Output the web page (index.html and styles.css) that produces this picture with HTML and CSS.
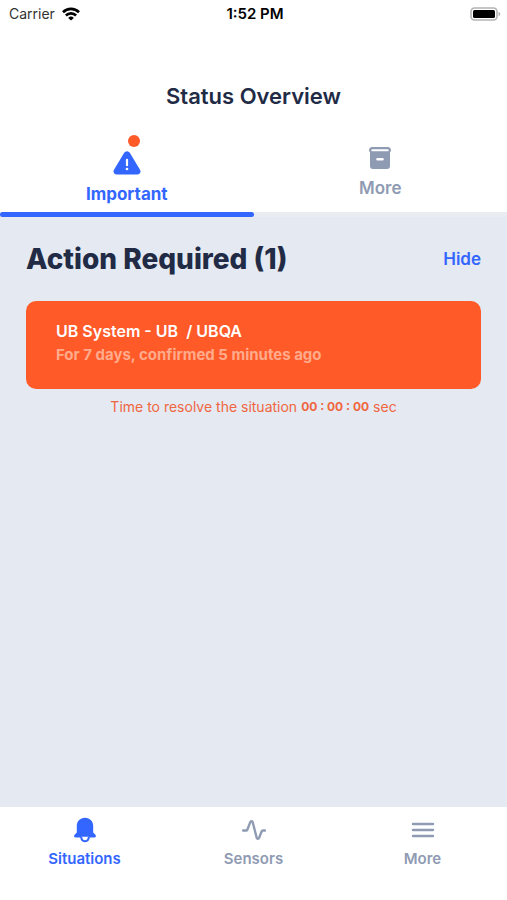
FILE: index.html
```html
<!DOCTYPE html>
<html lang="en">
<head>
    <meta charset="UTF-8">
    <meta name="viewport" content="width=device-width, initial-scale=1.0">
    <title>Status Overview</title>
    <link rel="stylesheet" href="styles.css">
</head>
<body>
    <div class="status-bar">
        <div class="carrier">
            <span>Carrier</span>
            <svg width="18" height="14" viewBox="0 0 18 14" fill="none" stroke="#000" stroke-width="2.6">
                <path d="M1 5.2a11.4 11.4 0 0 1 16 0"/>
                <path d="M3.9 8.5a7.2 7.2 0 0 1 10.2 0"/>
                <path d="M9 13.6L6.2 10.9a4 4 0 0 1 5.6 0z" fill="#000" stroke="none"/>
            </svg>
        </div>
        <span class="time">1:52 PM</span>
        <svg class="battery" width="31" height="14" viewBox="0 0 31 14">
            <rect x="1" y="1" width="26" height="12" rx="3.5" fill="#fff" stroke="#b4b4b4" stroke-width="1.6"/>
            <rect x="3" y="3" width="22" height="8" rx="1.5" fill="#000"/>
            <path d="M28.5 4.8c2.4.8 2.4 3.6 0 4.4z" fill="#b4b4b4"/>
        </svg>
    </div>

    <header class="header">
        <h1>Status Overview</h1>
        <nav class="tabs">
            <a href="#important" class="tab active">
                <span class="tab-icon">
                    <svg width="28" height="24" viewBox="0 0 28 24">
                        <path d="M11.2 1.8a3.3 3.3 0 0 1 5.6 0l10.2 17c1.3 2.3-.1 4.7-2.6 4.7H3.6C1.1 23.5-.3 21.1 1 18.8z" fill="#3366ff"/>
                        <path d="M14 8.8v5.4" stroke="#fff" stroke-width="2.2" stroke-linecap="round"/>
                        <circle cx="14" cy="18" r="1.3" fill="#fff"/>
                    </svg>
                    <span class="badge"></span>
                </span>
                <span>Important</span>
            </a>
            <a href="#more" class="tab">
                <svg width="22" height="22" viewBox="0 0 22 22" fill="currentColor">
                    <path fill-rule="evenodd" d="M3 0h16a3 3 0 0 1 2 5.2V19a3 3 0 0 1-3 3H4a3 3 0 0 1-3-3V5.200A3 3 0 0 1 3 0zm.3 2.200a1 1 0 0 0 0 2h15.400a1 1 0 0 0 0-2zM8.500 11a1.300 1.300 0 0 0 0 2.600h5a1.300 1.300 0 0 0 0-2.600z"/>
                </svg>
                <span>More</span>
            </a>
        </nav>
    </header>

    <main class="content">
        <div class="section-head">
            <h2>Action Required (1)</h2>
            <button type="button" class="hide-btn">Hide</button>
        </div>
        <div class="card">
            <p class="card-title">UB System - UB&nbsp; / UBQA</p>
            <p class="card-info">For 7 days, confirmed 5 minutes ago</p>
        </div>
        <p class="timer">
            <span>Time to resolve the situation</span>
            <strong>00 : 00 : 00</strong>
            <span>sec</span>
        </p>
    </main>

    <nav class="bottom-nav">
        <a href="#situations" class="nav-item active">
            <svg width="24" height="26" viewBox="0 0 24 26">
                <path d="M12 .8c5 0 8.200 3.600 8.200 8.200v6.500l2.200 2.300c1.100 1.300.4 2.800-1.200 2.800H2.800c-1.600 0-2.300-1.500-1.200-2.800l2.200-2.300V9C3.800 4.400 7 .8 12 .8z" fill="currentColor"/>
                <path d="M8.200 19.800c0 5.800 7.600 5.800 7.600 0" fill="#fff" stroke="currentColor" stroke-width="2"/>
            </svg>
            <span>Situations</span>
        </a>
        <a href="#sensors" class="nav-item">
            <svg width="24" height="26" viewBox="0 0 24 26" fill="none" stroke="currentColor" stroke-width="2.4" stroke-linecap="round" stroke-linejoin="round">
                <path d="M1 13.500h3.200c.6 0 .9-.3 1.100-.8l3-7.600c.5-1.300 2-1.200 2.400.1l4 15.600c.4 1.300 1.900 1.300 2.400.1l2.600-6.600c.2-.5.500-.8 1.100-.8H23"/>
            </svg>
            <span>Sensors</span>
        </a>
        <a href="#menu" class="nav-item">
            <svg width="24" height="26" viewBox="0 0 24 26" fill="none" stroke="currentColor" stroke-width="2.4" stroke-linecap="round">
                <path d="M2 7h20M2 13h20M2 19h20"/>
            </svg>
            <span>More</span>
        </a>
    </nav>
</body>
</html>
```
FILE: styles.css
```css
* {
    box-sizing: border-box;
}
body {
    font-family: Inter, "Liberation Sans", sans-serif;
    margin: 0;
    min-height: 100vh;
    display: flex;
    flex-direction: column;
    background-color: #fff;
    color: #222b45;
}
h1, h2, p {
    margin: 0;
}
a {
    text-decoration: none;
}
svg {
    display: block;
}
.status-bar {
    display: grid;
    grid-template-columns: 1fr auto 1fr;
    align-items: center;
    height: 27px;
    padding: 0 6px 0 9px;
    font-size: 14px;
    color: #000;
}
.carrier {
    display: flex;
    align-items: center;
    gap: 7px;
    color: #333;
}
.time {
    font-size: 15px;
    font-weight: 600;
}
.battery {
    justify-self: end;
}
.header h1 {
    padding: 55px 0 22px;
    font-size: 22px;
    font-weight: 600;
    line-height: 28px;
    text-align: center;
}
.tabs {
    display: grid;
    grid-template-columns: 1fr 1fr;
    height: 85px;
    border-bottom: 5px solid #e9edf2;
}
.tab {
    display: flex;
    flex-direction: column;
    align-items: center;
    justify-content: center;
    gap: 8px;
    padding-top: 2px;
    font-size: 17px;
    font-weight: 600;
    line-height: 22px;
    color: #8f9bb3;
}
.tab.active {
    position: relative;
    padding: 0 0 4px;
    font-weight: 700;
    color: #3366ff;
}
.tab.active::after {
    content: "";
    position: absolute;
    left: 0;
    right: 0;
    bottom: -5px;
    height: 5px;
    border-radius: 3px;
    background-color: #3366ff;
}
.tab-icon {
    position: relative;
    padding-top: 16px;
}
.badge {
    position: absolute;
    top: 0;
    right: 1px;
    width: 12px;
    height: 12px;
    border-radius: 50%;
    background-color: #ff5a28;
}
.content {
    flex: 1;
    padding: 24px 26px;
    background-color: #e4e9f2;
}
.section-head {
    display: flex;
    align-items: center;
    justify-content: space-between;
    margin-bottom: 24px;
}
.section-head h2 {
    font-size: 28px;
    font-weight: 800;
    line-height: 36px;
}
.hide-btn {
    padding: 0;
    border: none;
    background: none;
    font-family: inherit;
    font-size: 17px;
    font-weight: 600;
    color: #3366ff;
    cursor: pointer;
}
.card {
    padding: 18px 30px 22px;
    border-radius: 10px;
    background-color: #ff5a28;
    color: #fff;
}
.card-title {
    font-size: 16px;
    font-weight: 600;
    line-height: 24px;
}
.card-info {
    font-size: 15px;
    font-weight: 700;
    line-height: 24px;
    color: #ffab8c;
}
.timer {
    display: flex;
    justify-content: center;
    align-items: center;
    gap: 4px;
    margin-top: 8px;
    font-size: 14px;
    line-height: 20px;
    color: #f0663f;
}
.timer strong {
    font-size: 12px;
    font-weight: 700;
}
.bottom-nav {
    display: grid;
    grid-template-columns: repeat(3, 1fr);
    height: 93px;
    padding-top: 10px;
}
.nav-item {
    display: flex;
    flex-direction: column;
    align-items: center;
    gap: 6px;
    font-size: 15px;
    font-weight: 600;
    line-height: 20px;
    color: #8f9bb3;
}
.nav-item.active {
    color: #3366ff;
}
```
